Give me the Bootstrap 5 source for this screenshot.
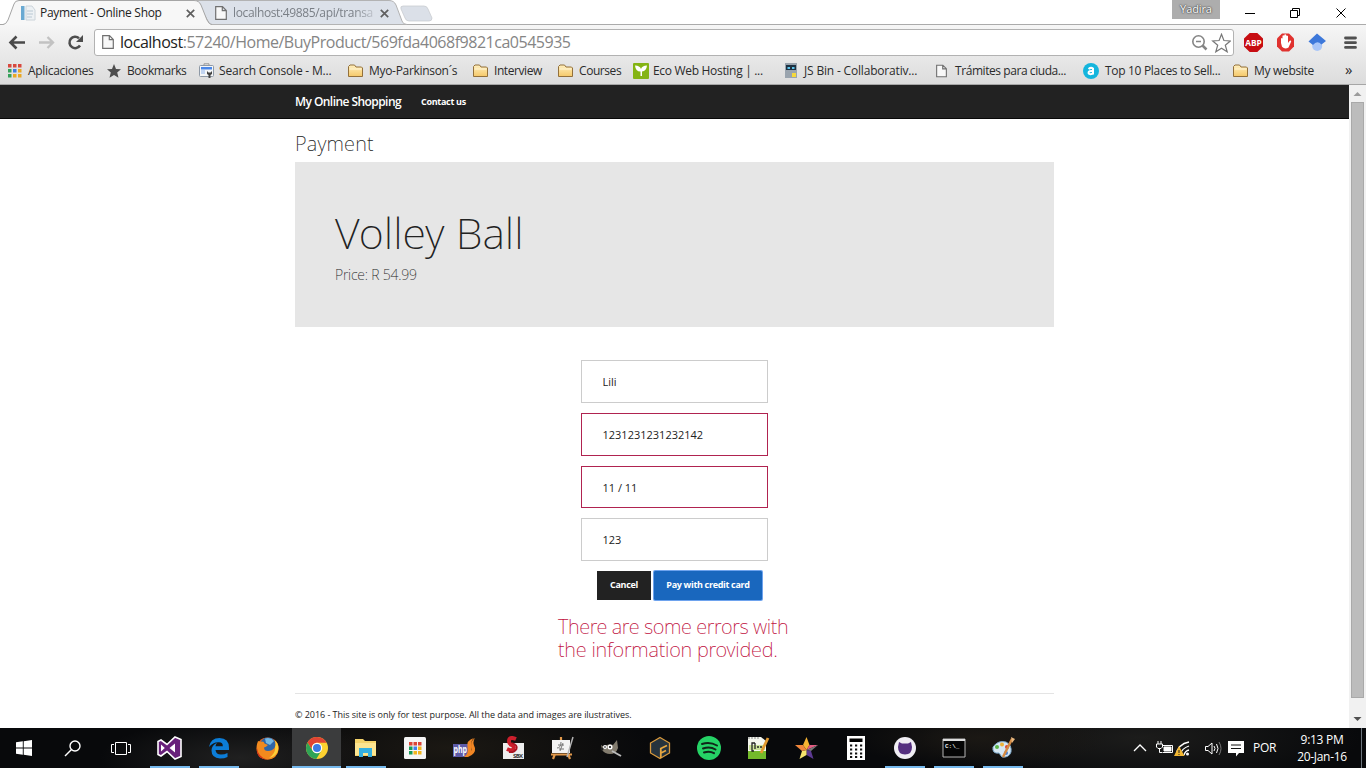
<!DOCTYPE html>
<html lang="en">
<head>
<meta charset="utf-8">
<meta name="viewport" content="width=device-width, initial-scale=1">
<title>Payment - Online Shop</title>
<link href="https://cdn.jsdelivr.net/npm/bootstrap@5.3.0/dist/css/bootstrap.min.css" rel="stylesheet">
<style>
body{font-family:"Open Sans",sans-serif;font-size:12px;line-height:16px;color:#222;background:#fff;height:768px;overflow:hidden}
svg{display:block;flex:none}
.text-line{white-space:nowrap}
/* browser chrome */
.browser-top{height:85px;background:linear-gradient(#f6f6f6 25px,#dcdcdc 84px);border-bottom:1px solid #a6a6a6}
.tab-strip{height:25px;background:#fff;position:relative}
.tab-shapes{position:absolute;left:0;top:0}
.tab-strip .tab-item{position:relative;height:25px;padding-top:1px}
.tab-one{width:197px;padding-left:20px;letter-spacing:-.3px;color:#222}
.tab-two{width:192px;padding-left:18px;letter-spacing:-.36px;color:#7a7f86}
.tab-label{display:inline-block;overflow:hidden;white-space:nowrap}
.tab-one .tab-label{margin-left:4px;width:127px}
.tab-two .tab-label{margin-left:6px;width:142px;-webkit-mask:linear-gradient(90deg,#000 86%,rgba(0,0,0,.3));mask:linear-gradient(90deg,#000 86%,rgba(0,0,0,.3))}
.tab-one .tab-x{margin-left:19px}.tab-two .tab-x{margin-left:7px}
.user-tag{width:48px;height:19px;background:#adadad;color:#fff;text-shadow:0 0 2px #333,0 0 1px #333;font-size:11px;letter-spacing:-.1px;text-align:center;line-height:18px;margin-left:auto}
.win-buttons{width:146px;height:25px;padding-left:25px}
.address-row{height:33px;padding:4px 8px 0}
.address-box{width:1141px;height:27px;background:#fff;border:1px solid #b2b2b2;border-radius:3px;margin-left:11px;padding:0 2px 0 7px}
.address-text{font-size:16px;letter-spacing:-.48px;color:#858585;margin-left:6px;line-height:25px}
.address-text b{font-weight:400;color:#222}
.ext-row{margin-left:10px}
.bookmark-row{height:25px;padding-left:8px;display:grid;grid-template-columns:99px 92px 149px 125px 85px 75px 152px 151px 147px 150px 112px 1fr;align-items:center;letter-spacing:-.31px;color:#2b2b2b}
.bookmark-row>div{display:flex;align-items:center;white-space:nowrap;height:20px}
.bookmark-row svg{margin-right:6px}
.looser{letter-spacing:-.18px}.tighter{letter-spacing:-.43px}
.overflow-mark{font-size:15px;padding-bottom:4px}
/* page */
.viewport-area{height:643px}
.site{width:1349px}
.site-nav{height:34px;background:#222;border-bottom:1px solid #080808;padding:0}
.site-width{width:759px;margin-left:295px}
.site-name{font-weight:600;font-size:12px;letter-spacing:-.56px;color:#fff;line-height:33px;width:126px}
.site-link{font-weight:700;font-size:9px;letter-spacing:-.3px;color:#fff;line-height:33px}
h2.page-title{font-family:"Noto Sans",sans-serif;font-weight:200;font-size:20px;letter-spacing:.2px;line-height:24px;margin:13px 0 6px;color:#222}
.product-box{height:165px;background:#e6e6e6;padding:45px 40px 0}
.product-box h1{font-family:"Noto Sans",sans-serif;font-weight:200;font-size:43px;line-height:52px;letter-spacing:.06px;margin:0;color:#222}
.product-box p{font-family:"Noto Sans",sans-serif;font-weight:250;font-size:14px;line-height:20px;letter-spacing:-.2px;margin:6px 0 0}
.pay-form{width:187px;margin:33px auto 0 286px}
.pay-form .form-control{height:43px;border:1px solid #ccc;border-radius:0;padding:0 20.500px;font-size:11px;color:#222;margin-bottom:10px;line-height:41px;transition:none}
.pay-form .form-control.has-error{border-color:#b02350}
.pay-form .form-control.short{height:42px}
.pay-buttons{margin-left:302px;gap:3px}
.pay-buttons .btn{height:29px;border-radius:0;font-size:9px;font-weight:700;padding:0 0 2px;line-height:25px;color:#fff;letter-spacing:-.32px}
.btn-cancel{background:#222;border-color:#222;width:54px}
.btn-pay{background:#1967be;border:1px solid #1967be;width:108px;box-shadow:0 0 0 1px #6ea3ee;border-radius:1px!important}
.error-note{font-family:"Noto Sans",sans-serif;font-weight:220;font-size:20px;line-height:23px;letter-spacing:-.4px;color:#c01040;margin:15px 0 0 263px}
.error-note .last-line{letter-spacing:-.22px}
.site-foot{border-top:1px solid #e4e4e4;margin-top:32px;padding-top:13px;font-size:9px;letter-spacing:-.04px}
.scroll-rail{width:17px;background:#f1f1f1}
.scroll-thumb{width:13px;height:596px;background:#bcbcbc;border:1px solid #a9a9a9}
/* taskbar */
.task-bar{height:40px;background:radial-gradient(ellipse 140px 40px at 240px 30px,#202020,transparent),radial-gradient(ellipse 200px 50px at 450px 20px,#1b1813,transparent),radial-gradient(ellipse 130px 30px at 980px 10px,#1b1814,transparent),radial-gradient(ellipse 220px 50px at 1140px 10px,#1c1c1b,transparent),#08090b;color:#fff}
.task-slot{width:49px;height:40px;display:flex;align-items:center;justify-content:center;flex:none}
.task-slot.sys{width:48.4px}
.task-slot.open{background:linear-gradient(#76b9ed,#76b9ed) 50% 100%/40px 2px no-repeat}
.task-slot.active{background:linear-gradient(#76b9ed,#76b9ed) 50% 100%/49px 2px no-repeat,#3b3c3d}
.tray-lang{letter-spacing:-.35px}
.task-clock{width:52px;margin-left:20px;text-align:center;line-height:17px;letter-spacing:-.3px;white-space:nowrap}
.desktop-edge{width:5px;margin-left:13px}
</style>
</head>
<body class="d-flex flex-column">
<svg width="0" height="0" class="position-absolute">
<defs>
<linearGradient id="gf" x2="0" y2="1"><stop stop-color="#fff0c0"/><stop offset="1" stop-color="#f5c868"/></linearGradient>
<symbol id="folder" viewBox="0 0 15 14"><path d="M.5 12.500V2.500L2 1H6.500L8 3H13.500L14.500 4V12.500Z" fill="url(#gf)" stroke="#93703a"/><path d="M1.500 5H13.500" stroke="#fff6d8"/></symbol>
<symbol id="doc" viewBox="0 0 12 14"><path d="M.7.7H7.500L11.300 4.500V13.300H.7ZM7.300.7V4.700H11.300" fill="#f8f8f8" stroke="#707070" stroke-width="1.200"/></symbol>
<symbol id="cross" viewBox="0 0 9 9"><path d="M.8.8 8.200 8.200M8.200.8.8 8.200" stroke="#5f5f5f" stroke-width="1.700"/></symbol>
</defs>
</svg>

<header class="browser-top">
  <div class="tab-strip d-flex">
    <svg class="tab-shapes" width="1366" height="25">
      <path d="M0 24.500H1366" stroke="#ababab"/>
      <path d="M196 .5H389Q394 .5 396 5L402 21Q403 24.500 407 24.500H210Z" fill="#dce1e9" stroke="#b3b3b3"/>
      <path d="M403 6H424Q427 6 428 9L432 18Q432 21 429 21H409Q406 21 405 18L401 9Q400 6 403 6Z" fill="#dbe0e8" stroke="#c4c7cc" stroke-width=".7"/>
      <path d="M2 25Q6 24.500 8 20L14 4Q15 .5 19 .5H194Q199 .5 201 5L207 20Q209 24.500 212 25Z" fill="#f7f7f7"/>
      <path d="M0 24.500H3Q6 24.500 8 20L14 4Q15 .5 19 .5H194Q199 .5 201 5L207 20Q209 24.500 212 24.500" fill="none" stroke="#a5a5a5"/>
    </svg>
    <div class="tab-item tab-one d-flex align-items-center">
      <svg width="16" height="16"><path d="M1 1H4.500V15H1Z" fill="#69a9d2"/><path d="M6 1H12L15 5V15H6Z" fill="#edf1f4" stroke="#ccd4da"/><path d="M7 6H13M7 9H13M7 12H12" stroke="#b9c8d3"/></svg>
      <span class="tab-label">Payment - Online Shop</span>
      <svg class="tab-x" width="9" height="9"><use href="#cross"/></svg>
    </div>
    <div class="tab-item tab-two d-flex align-items-center">
      <svg width="12" height="14"><use href="#doc"/></svg>
      <span class="tab-label">localhost:49885/api/transa</span>
      <svg class="tab-x" width="9" height="9"><use href="#cross"/></svg>
    </div>
    <div class="user-tag position-relative">Yadira</div>
    <svg class="win-buttons position-relative" width="146" height="25" fill="none" stroke="#000"><path d="M0 13.500H10M45.500 10.500H52.500V17.500H45.500ZM47.500 10V8.500H54.500V15.500H53M91.500 8.500 100.500 17.500M100.500 8.500 91.500 17.500"/></svg>
  </div>
  <div class="address-row d-flex align-items-start">
    <svg class="mt-1" width="75" height="20" fill="none"><path d="M2.500 9.500H17M8.500 3.500 2.500 9.500 8.500 15.500" stroke="#4a4a4a" stroke-width="2.600"/><path d="M31 9.500H45M39.500 4 45 9.500 39.500 15" stroke="#c2c2c2" stroke-width="2.300"/><path d="M72 12.500A5.700 5.700 0 1 1 71 5.200" stroke="#4d4d4d" stroke-width="2.500"/><path d="M75 2V9H68Z" fill="#4d4d4d"/></svg>
    <div class="address-box d-flex align-items-center">
      <svg width="12" height="15"><use href="#doc" width="12" height="14"/></svg>
      <span class="address-text text-line"><b>localhost</b>:57240/Home/BuyProduct/569fda4068f9821ca0545935</span>
      <svg class="ms-auto" width="40" height="20" fill="none" stroke="#858585"><circle cx="7.500" cy="8.500" r="5.700" stroke-width="1.600"/><path d="M5 8.500H10" stroke-width="1.500"/><path d="M11.500 12.500 15.500 16.500" stroke-width="2.500"/><path d="M30.500 1.300 32.900 7.500 39.300 8 34.300 12.200 36.200 18.800 30.500 15.200 24.800 18.800 26.700 12.200 21.700 8 28.100 7.500Z" stroke="#777" stroke-width="1.200"/></svg>
    </div>
    <svg class="ext-row" width="114" height="27">
      <path d="M5.700 4H13.300L19 9.500V17.500L13.300 23H5.700L0 17.500V9.500Z" fill="#c70d12"/>
      <text x="1.300" y="17" font-size="9" font-weight="700" letter-spacing="0" fill="#fff" textLength="16.500" lengthAdjust="spacingAndGlyphs">ABP</text>
      <path d="M38 4.500H45L50 9.500V17.500L45 22.500H38L33 17.500V9.500Z" fill="#e0322f"/>
      <path d="M37 14V9.500Q37.800 8.500 38.500 9.500V13V6.800Q39.400 5.800 40.300 6.800V12V5.800Q41.300 4.900 42.200 5.800V12V6.800Q43.100 6 44 7V14L45.500 12Q47 11 47.200 12.500L44.500 18.500Q41 21 38 17.800Z" fill="#fff"/>
      <circle cx="73.200" cy="17" r="5" fill="#a9c6f8"/><path d="M64.500 12.500 73 4.500 82 12 77.500 15.500Q73 11 69 16Z" fill="#3d78da"/>
      <path d="M101.500 9H111.500M101.500 13.700H111.500M101.500 18.400H111.500" stroke="#505050" stroke-width="2.800" stroke-linecap="round"/>
    </svg>
  </div>
  <nav class="bookmark-row">
    <div><svg width="14" height="14"><path d="M0 0h3.500v3.500H0zM5 0h3.500v3.500H5zM10 0h3.500v3.500H10z" fill="#d8483e"/><path d="M0 5h3.500v3.500H0z" fill="#36a15a"/><path d="M5 5h3.500v3.500H5z" fill="#3f7de0"/><path d="M10 5h3.500v3.500H10zM5 10h3.500v3.500H5zM10 10h3.500v3.500H10z" fill="#eaa824"/><path d="M0 10h3.500v3.500H0z" fill="#36a15a"/></svg>Aplicaciones</div>
    <div class="tighter"><svg width="14" height="14"><path d="M7 0 9 5 14 5.300 10.200 8.600 11.500 13.700 7 10.900 2.500 13.700 3.800 8.600 0 5.300 5 5Z" fill="#4d4d4d"/></svg>Bookmarks</div>
    <div class="looser"><svg class="me-1" width="16" height="16"><path d="M5 2V.8H10V2" fill="none" stroke="#999"/><rect x=".5" y="2.500" width="14" height="11" rx="1" fill="#f4f6f8" stroke="#8e99a6"/><path d="M2 4H13V6.500H2Z" fill="#4a87e8"/><path d="M2 8H6M2 10H6" stroke="#8fb3ea"/><path d="M8 8V11L9.500 12V15H11.500V12L13 11V8L11.500 9.500H9.500Z" fill="#444"/></svg>Search Console - M...</div>
    <div><svg width="15" height="14"><use href="#folder"/></svg>Myo-Parkinson´s</div>
    <div class="tighter"><svg width="15" height="14"><use href="#folder"/></svg>Interview</div>
    <div class="tighter"><svg width="15" height="14"><use href="#folder"/></svg>Courses</div>
    <div><svg class="me-1" width="16" height="16"><rect width="16" height="16" rx="1" fill="#84b414"/><path d="M7.500 13V8.500Q2.500 8.500 2 2.500Q7 2.500 8 6Q9 2.500 14 2.500Q13.500 8 9 8.500V13Z" fill="#fff"/></svg>Eco Web Hosting | ...</div>
    <div class="looser"><svg width="13" height="15"><path d="M0 0H12V15H0Z" fill="#9aa4ae"/><path d="M1 2H11V7H1Z" fill="#1e3040"/><path d="M2.500 4H5V6H2.500ZM7 4H9.500V6H7Z" fill="#5cc4ec"/><path d="M7 10H11V14H7Z" fill="#f5d93c"/></svg>JS Bin - Collaborativ...</div>
    <div class="tighter"><svg class="me-2" width="11" height="14"><use href="#doc"/></svg>Trámites para ciuda...</div>
    <div><svg width="16" height="16"><circle cx="8" cy="8" r="8" fill="#14b5dd"/><path d="M5.500 6Q8 4 10 5.500V11.500M10 8Q5.500 7.500 5.500 10Q6 12 10 10.500" fill="none" stroke="#fff" stroke-width="2"/></svg>Top 10 Places to Sell...</div>
    <div><svg width="15" height="14"><use href="#folder"/></svg>My website</div>
    <div class="overflow-mark">»</div>
  </nav>
</header>

<div class="viewport-area d-flex">
  <div class="site">
    <nav class="site-nav navbar d-block">
      <div class="site-width d-flex">
        <a class="site-name text-decoration-none text-line">My Online Shopping</a>
        <a class="site-link text-decoration-none text-line">Contact us</a>
      </div>
    </nav>
    <main class="site-width">
      <h2 class="page-title">Payment</h2>
      <section class="product-box">
        <h1>Volley Ball</h1>
        <p>Price: R 54.99</p>
      </section>
      <form class="pay-form">
        <input class="form-control" value="Lili">
        <input class="form-control has-error" value="1231231231232142">
        <input class="form-control has-error short" value="11 / 11">
        <input class="form-control" value="123">
      </form>
      <div class="pay-buttons d-flex">
        <button class="btn btn-cancel">Cancel</button>
        <button class="btn btn-pay">Pay with credit card</button>
      </div>
      <p class="error-note">There are some errors with<br><span class="last-line">the information provided.</span></p>
      <footer class="site-foot">© 2016 - This site is only for test purpose. All the data and images are ilustratives.</footer>
    </main>
  </div>
  <aside class="scroll-rail d-flex flex-column align-items-center">
    <svg width="17" height="17"><path d="M4.500 11H12.500L8.500 7Z" fill="#9c9c9c"/></svg>
    <div class="scroll-thumb"></div>
    <svg class="mt-auto" width="17" height="17"><path d="M4.500 6H12.500L8.500 10Z" fill="#505050"/></svg>
  </aside>
</div>

<footer class="task-bar d-flex align-items-center">
  <div class="task-slot sys"><svg width="16" height="16" fill="#fff"><path d="M0 2.300 6.800 1.300V7.500H0ZM7.700 1.200 16 0V7.500H7.700ZM0 8.400H6.800V14.700L0 13.700ZM7.700 8.400H16V16L7.700 14.800Z"/></svg></div>
  <div class="task-slot sys"><svg width="17" height="17" fill="none" stroke="#fff" stroke-width="1.400"><circle cx="11" cy="6" r="5"/><path d="M7.500 9.500 1 16"/></svg></div>
  <div class="task-slot sys"><svg width="20" height="15" fill="none" stroke="#fff"><path d="M4.500 1.500H15.500V13.500H4.500ZM3 3.500H.5V11.500H3M17 3.500H19.500V11.500H17"/></svg></div>
  <div class="task-slot open"><svg width="25" height="24"><path d="M18 1 24 3.500V20.500L18 23 10 15.500 4 20 1 18.500V5.500L4 4 10 8.500Z" fill="#68217a" stroke="#fff" stroke-width="1.600"/><path d="M18 7.500V16.500L12.500 12ZM4 8.500V15.500L7.800 12Z" fill="#fff"/></svg></div>
  <div class="task-slot open"><svg width="22" height="22"><path d="M1 10Q2.500 1 11.500 1Q21 1 21 11V13H7.500Q8 17.500 13 17.500Q16.500 17.500 19.500 16V20Q16.500 21.500 12 21.500Q3.500 21 3.500 13.500Q3.500 8.500 9 5.800Q7.700 7.500 7.500 9.300H14.800Q15 5.300 11 5.300Q5 5 1 10Z" fill="#0c7dd8"/></svg></div>
  <div class="task-slot"><svg width="23" height="23"><circle cx="11.500" cy="11.500" r="11" fill="#e8631a"/><circle cx="12" cy="9" r="8.500" fill="#2e66a8"/><path d="M9 1.500Q15 0 18 4L14 8 10 6Z" fill="#74b9e4"/><path d="M2 4Q3.500 5 5 4.800Q8 4 8.500 6.500L12 8Q10 10 8 10.500Q8 14 12 14Q16 14 18.500 11Q20.500 7 18.500 3Q23 6 22.500 12Q21.500 22 11.500 22.500Q1 22 .8 12Q.5 7 2 4Z" fill="#f18a1e"/><path d="M18.500 3Q24 8 21.500 15Q19 20 13 21Q20 16 19 10Q20.500 7 18.500 3Z" fill="#fccf38"/><path d="M1 11Q2 20 11 22.500Q0 22 1 11Z" fill="#d43518"/></svg></div>
  <div class="task-slot active"><svg width="22" height="22"><circle cx="11" cy="11" r="11" fill="#fdd130"/><path d="M1.500 5.500A11 11 0 0 1 20.600 5.800H11A5.200 5.200 0 0 0 6.300 13.300Z" fill="#e04434"/><path d="M1.500 5.500A11 11 0 0 0 10.300 22L15.500 13.600A5.200 5.200 0 0 1 6.300 13.300Z" fill="#2fa456"/><circle cx="11" cy="11" r="5.200" fill="#fff"/><circle cx="11" cy="11" r="4" fill="#3b7be4"/></svg></div>
  <div class="task-slot open"><svg width="23" height="20"><path d="M1 1H9L11 3H22V18H1Z" fill="#f5d36a"/><path d="M1 5H22V17H1Z" fill="#fde590"/><path d="M5 19V10H18V19H14V15H9V19Z" fill="#35b0e0"/></svg></div>
  <div class="task-slot"><svg width="22" height="22"><rect width="22" height="22" rx="1.500" fill="#f5f5f5"/><path d="M5 5h3.500v3.500H5zM9.500 5H13v3.500H9.500zM14 5h3.500v3.500H14z" fill="#dc4437"/><path d="M5 9.500h3.500V13H5zM5 14h3.500v3.500H5z" fill="#169b57"/><path d="M9.500 9.500H13V13H9.500z" fill="#4080ec"/><path d="M14 9.500h3.500V13H14zM9.500 14H13v3.500H9.500zM14 14h3.500v3.500H14z" fill="#f2b51d"/></svg></div>
  <div class="task-slot"><svg width="24" height="22"><path d="M1 7H16V20H1Z" fill="#5d5ba7"/><path d="M23 1Q18 4 19.500 10Q21 16 12 20H16Q24 17 23 11Q20 5 23 1ZM22 1Q14 3 15.500 11Q17 16 12 20Q20 18 19.500 10Q18 4 22 1Z" fill="#f18624"/><text x="1.500" y="16" font-size="10" font-weight="700" fill="#fff" textLength="13.500" lengthAdjust="spacingAndGlyphs">php</text></svg></div>
  <div class="task-slot"><svg width="24" height="24"><path d="M2 7H23V23H2Z" fill="#eee"/><path d="M15 3Q8 0 8 5.500Q8 8 11.500 9.500Q14 11 12 13.500Q10 15 6 13" fill="none" stroke="#cc1f2c" stroke-width="4"/><path d="M11 7Q17 9 15.500 13Q13 17 8 16" fill="none" stroke="#a91422" stroke-width="1.800"/><text x="12" y="22" font-size="6" font-weight="700" textLength="10" fill="#333">SBX</text></svg></div>
  <div class="task-slot"><svg width="24" height="24"><path d="M11 1V5M5 18 3 23M18 18 20 23M1 18.500H22" stroke="#e39a4c" stroke-width="2.200"/><path d="M2 4H20V17H2Z" fill="#f3f3f3"/><path d="M8 9H14M11 6Q11 12 7 12M13 7 10 15M9 13H14" fill="none" stroke="#777" stroke-width="1"/><path d="M23 1 17 21" stroke="#b4b4b4" stroke-width="1.500"/></svg></div>
  <div class="task-slot"><svg width="24" height="20"><path d="M2 7 5 9Q9 5 14 7L18 2 19 10Q17 16 11 16Q6 16 3 12Z" fill="#837c6e"/><circle cx="6" cy="9" r="2" fill="#fff"/><circle cx="11" cy="9" r="2.500" fill="#fff"/><circle cx="6" cy="9" r=".8"/><circle cx="11" cy="9" r="1"/><path d="M13 13 22 18" stroke="#bbb" stroke-width="2"/><circle cx="3" cy="11" r="1.500" fill="#222"/></svg></div>
  <div class="task-slot"><svg width="22" height="24"><path d="M11 1.500 20.500 7V17L11 22.500 1.500 17V7Z" fill="#26333d" stroke="#d99a3d" stroke-width="1.300"/><path d="M11.800 22V12.500L18 9.500M12 17 17 14.500" fill="none" stroke="#e8a740" stroke-width="1.800"/></svg></div>
  <div class="task-slot"><svg width="24" height="24"><circle cx="12" cy="12" r="12" fill="#25d366"/><path d="M5 8Q13 5.500 20 9.500M6 12.500Q13 10 18.500 13.500M7 16.500Q12.500 14.500 17 17.200" fill="none" stroke="#10261a" stroke-width="2" stroke-linecap="round"/></svg></div>
  <div class="task-slot"><svg width="24" height="24"><path d="M2 1H15L20 5V23H2Z" fill="#f4f6ee"/><path d="M3 9H19V14H3Z" fill="#cbe29a"/><path d="M2 15H20V23H2Z" fill="#73b92b"/><path d="M3 1V3M6 1V3M9 1V3M12 1V3" stroke="#888"/><path d="M9 7H6V15H8M9 7V13M11 11H13M14 11H16" fill="none" stroke="#222" stroke-width="1.300"/><path d="M22 2 15 17" stroke="#e39a2f" stroke-width="2.800"/></svg></div>
  <div class="task-slot"><svg width="23" height="23"><path d="M11.500 0 14.500 8 11.500 13 8 8Z" fill="#f6b432"/><path d="M14.500 8H23L11.500 13Z" fill="#e65d84"/><path d="M23 8 16 14 11.500 13Z" fill="#777"/><path d="M16 14 18.500 22 11.500 18V13Z" fill="#5c3992"/><path d="M11.500 18 4.500 22 7 14 11.500 13Z" fill="#f5e36c"/><path d="M7 14 0 8H8L11.500 13Z" fill="#f1873c"/></svg></div>
  <div class="task-slot"><svg width="18" height="24"><path d="M0 0H18V24H0Z" fill="#fff"/><path d="M2.500 2.500H15.500V6H2.500Z"/><path d="M3 9.500H15.500M3 13.500H15.500M3 17.500H15.500M3 21H15.500" stroke="#111" stroke-width="2.200" stroke-dasharray="2.200 2.800"/></svg></div>
  <div class="task-slot open"><svg width="22" height="22"><circle cx="11" cy="11" r="11" fill="#f0eef4"/><path d="M5 5 8 6.500H14L17 5 18 10Q18 17.500 11 17.500T4 10Z" fill="#553080"/></svg></div>
  <div class="task-slot open"><svg width="24" height="20"><path d="M1 1H23V19H1Z" fill="#050505" stroke="#b5b5b5"/><path d="M1 2H23" stroke="#ddd" stroke-width="2"/><text x="3" y="10" font-size="6" fill="#eee" font-family="Liberation Mono" font-weight="700">C:\_</text></svg></div>
  <div class="task-slot open"><svg width="24" height="24"><path d="M2 11Q7 4 15 6Q21 9 20 16Q18 22 11 21L8 17Q1 18 2 11Z" fill="#d7e8f4" stroke="#7faacb"/><circle cx="6" cy="11" r="2" fill="#59b548"/><circle cx="11" cy="8.500" r="2" fill="#eeb238"/><circle cx="16" cy="11" r="2" fill="#dc4234"/><circle cx="15" cy="17" r="2" fill="#467fd2"/><path d="M21 3 12 21" stroke="#d48a42" stroke-width="2.500"/><path d="M20 1 24 3 21 7Z" fill="#e8b77f"/></svg></div>
  <svg class="ms-auto" width="120" height="24" fill="none" stroke="#fff"><path d="M1 15 7 9 13 15" stroke-width="1.300"/><path d="M29.500 9.500H39.500V16.500H29.500"/><path d="M31 11H38V15H31Z" fill="#fff"/><path d="M25 5V8M28 5V8M23.500 8H29.500V11L28 12.500H25L23.500 11ZM26.500 12V16.500H29" /><path d="M43 19Q45 8 56 6M47 19Q49 12 56 10M51 19Q52 15 56 14" stroke-width="1.300"/><circle cx="54.500" cy="18" r="1.500" fill="#fff" stroke="none"/><path d="M46 10 51.500 20H41Z" fill="#f2b731" stroke="none"/><path d="M46 14V17M46 18V19" stroke="#222"/><path d="M72.500 10.500H75L79 7V18L75 14.500H72.500ZM81 10Q83 12.500 81 15M83.500 8Q86.500 12.500 83.500 17"/><path d="M86 6Q90 12.500 86 19" stroke="#777"/><path d="M95 5H111V17H106L103 20.500V17H95Z" fill="#fff" stroke="none"/><path d="M98 9H108M98 12.500H108" stroke="#111"/></svg>
  <span class="tray-lang">POR</span>
  <div class="task-clock"><div>9:13 PM</div><div>20-Jan-16</div></div>
  <div class="desktop-edge border-start border-secondary h-100"></div>
</footer>
<script src="https://cdn.jsdelivr.net/npm/bootstrap@5.3.0/dist/js/bootstrap.bundle.min.js"></script>
</body>
</html>
